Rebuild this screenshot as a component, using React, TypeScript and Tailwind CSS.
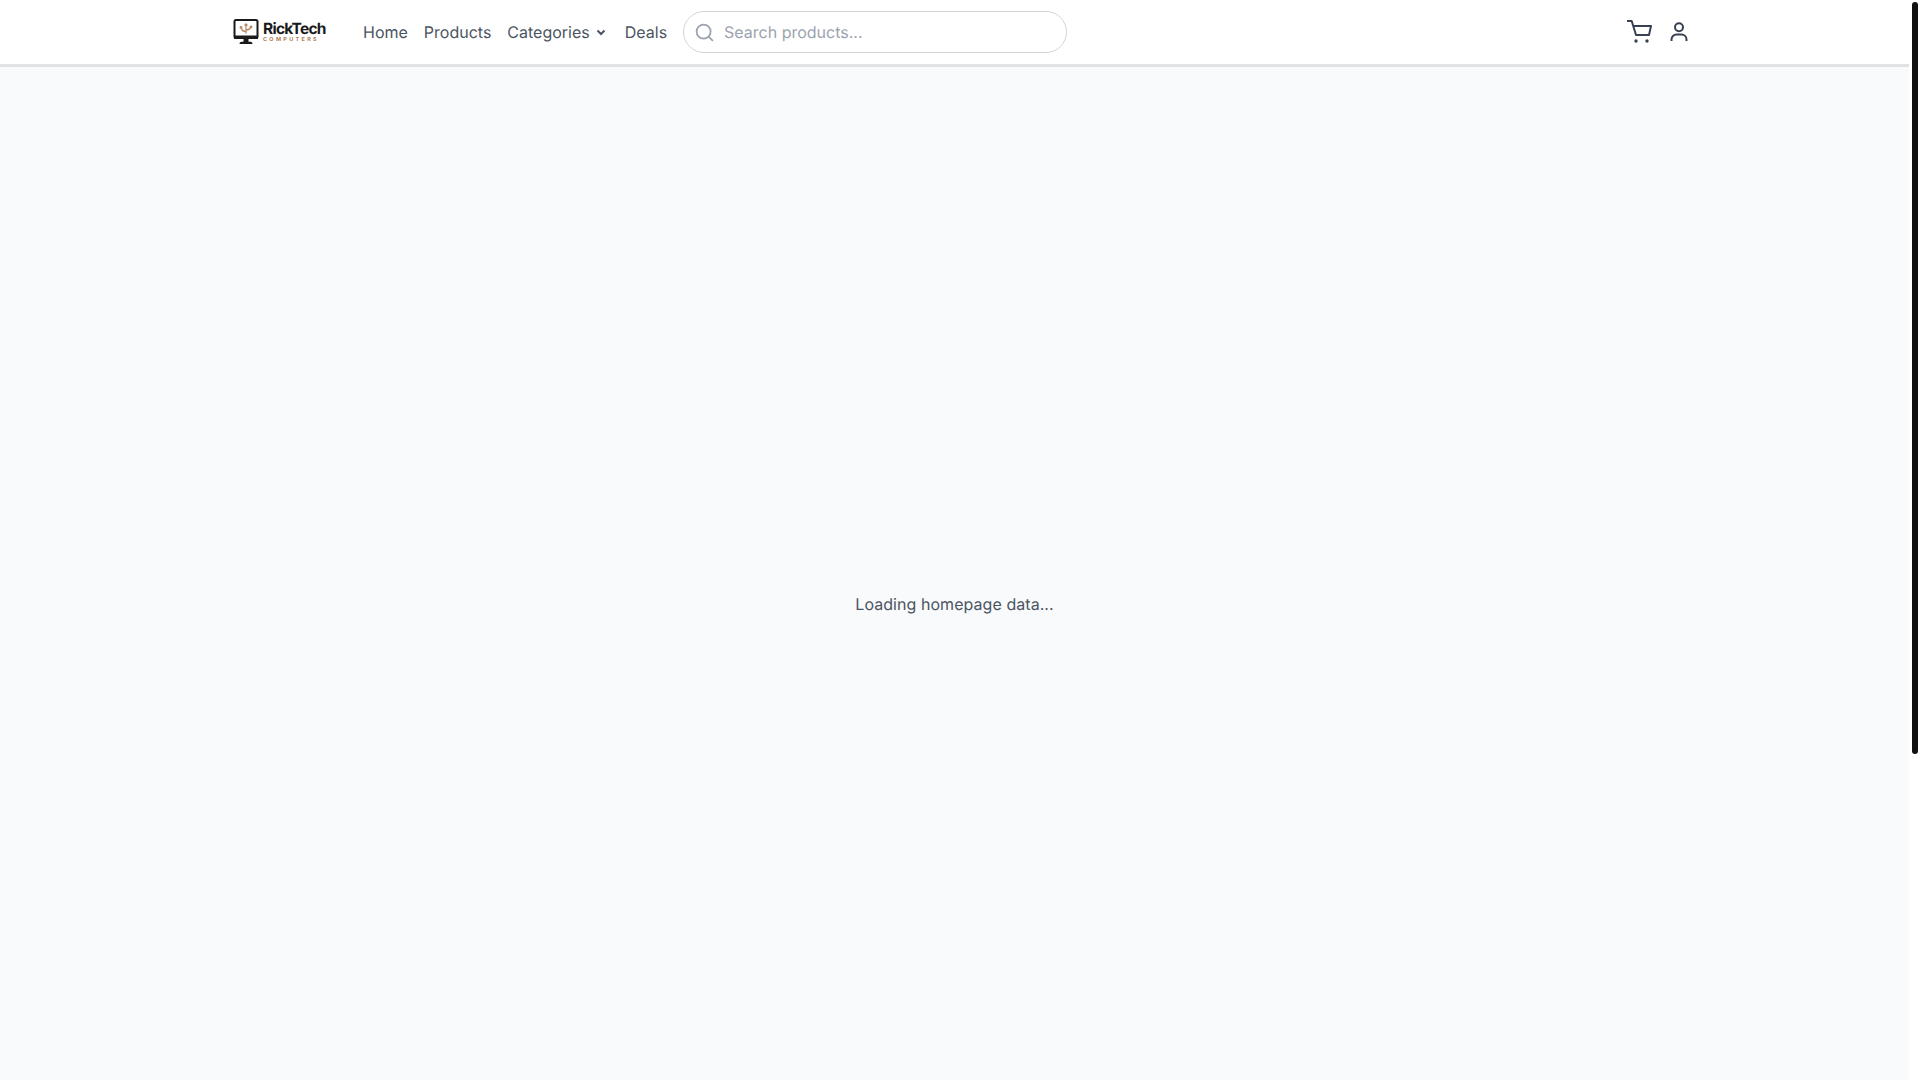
import { Search } from 'lucide-react';

function Logo() {
  return (
    <div className="flex items-center w-[92px] h-[26px] shrink-0">
      <svg className="w-[26px] h-[26px] shrink-0" viewBox="0 0 26 26" fill="none">
        <rect x="1.5" y="1" width="23" height="18" rx="1.5" stroke="#1a1a1a" strokeWidth="2" />
        <path d="M1 16.5h24v3.5H1z" fill="#1a1a1a" />
        <path d="M10.5 20h5v3h-5z" fill="#1a1a1a" />
        <path d="M6.5 25c0-1.5 1-2.2 2-2.2h9c1 0 2 .7 2 2.2z" fill="#1a1a1a" />
        <path d="M13 5v9.5M13 12.5c-2.4 0-4-.8-4.5-3M13 11c2.4 0 3.8-.6 4.5-2.5M11.5 6.5 13 5l1.5 1.5" stroke="#b98a68" strokeWidth="1.3" />
        <circle cx="8" cy="8.5" r="1.4" fill="#b98a68" />
        <circle cx="18" cy="8" r="1.4" fill="#b98a68" />
      </svg>
      <div className="ml-[4px] flex flex-col">
        <span className="font-['Inter',sans-serif] font-bold text-[15.5px] leading-[15px] tracking-[-0.75px] text-[#1a1a1a]">RickTech</span>
        <span className="mt-[1px] font-['Inter',sans-serif] font-bold text-[5.5px] leading-[6px] tracking-[2.3px] text-[#b07f5c]">COMPUTERS</span>
      </div>
    </div>
  );
}

function CartIcon() {
  return (
    <svg className="w-[26px] h-[24px]" viewBox="0 0 26 24" fill="none" stroke="currentColor" strokeWidth="2" strokeLinejoin="round">
      <path d="M1 1h4.7L10 15h13l2-9H7.2" />
      <circle cx="10" cy="21" r="1.7" fill="currentColor" stroke="none" />
      <circle cx="21" cy="21" r="1.7" fill="currentColor" stroke="none" />
    </svg>
  );
}

function UserIcon() {
  return (
    <svg className="w-[20px] h-[22px]" viewBox="0 0 20 22" fill="none" stroke="currentColor" strokeWidth="2">
      <circle cx="10" cy="6.3" r="4" />
      <path d="M2.5 20v-1.5a5 5 0 0 1 5-5h5a5 5 0 0 1 5 5V20" />
    </svg>
  );
}

export default function App() {
  return (
    <div className="flex h-screen overflow-hidden bg-white font-['Inter',sans-serif] [text-rendering:geometricPrecision]">
      <div className="w-[1909px] shrink-0 flex flex-col bg-[#f9fafb]">
        {/* Navbar */}
        <header className="h-[67px] shrink-0 bg-white border-b-[3px] border-[#e0e2e6]">
          <div className="h-full flex items-center pl-[233px] pr-[220px]">
            <Logo />
            <nav className="ml-[38px] flex items-center gap-4 text-base text-[#4b5563]">
              <a>Home</a>
              <a>Products</a>
              <a className="flex items-center gap-[3px]">
                Categories
                <svg className="w-4 h-4" viewBox="0 0 16 16" fill="none" stroke="currentColor" strokeWidth="2">
                  <path d="M4.5 6.5 8 10l3.5-3.5" />
                </svg>
              </a>
              <a>Deals</a>
            </nav>
            <div className="ml-4 w-[384px] h-[42px] flex items-center rounded-full border border-[#d1d5db] pl-[10px] pr-3">
              <Search className="w-[21px] h-[21px] text-[#9ca3af]" />
              <span className="ml-[9px] text-base text-[#9ca3af]">Search products...</span>
            </div>
            <div className="ml-auto flex items-center gap-[17px] text-[#374151]">
              <CartIcon />
              <UserIcon />
            </div>
          </div>
        </header>

        {/* Loading state */}
        <main className="h-[1074px] shrink-0 flex items-center justify-center">
          <p className="text-base tracking-[0.05px] text-[#4b5563]">Loading homepage data...</p>
        </main>
      </div>

      {/* Scrollbar */}
      <div className="flex-1 pl-[3px] pr-[2px] pt-[2px]">
        <div className="w-[6px] h-[752px] rounded-full bg-[#111111]" />
      </div>
    </div>
  );
}
